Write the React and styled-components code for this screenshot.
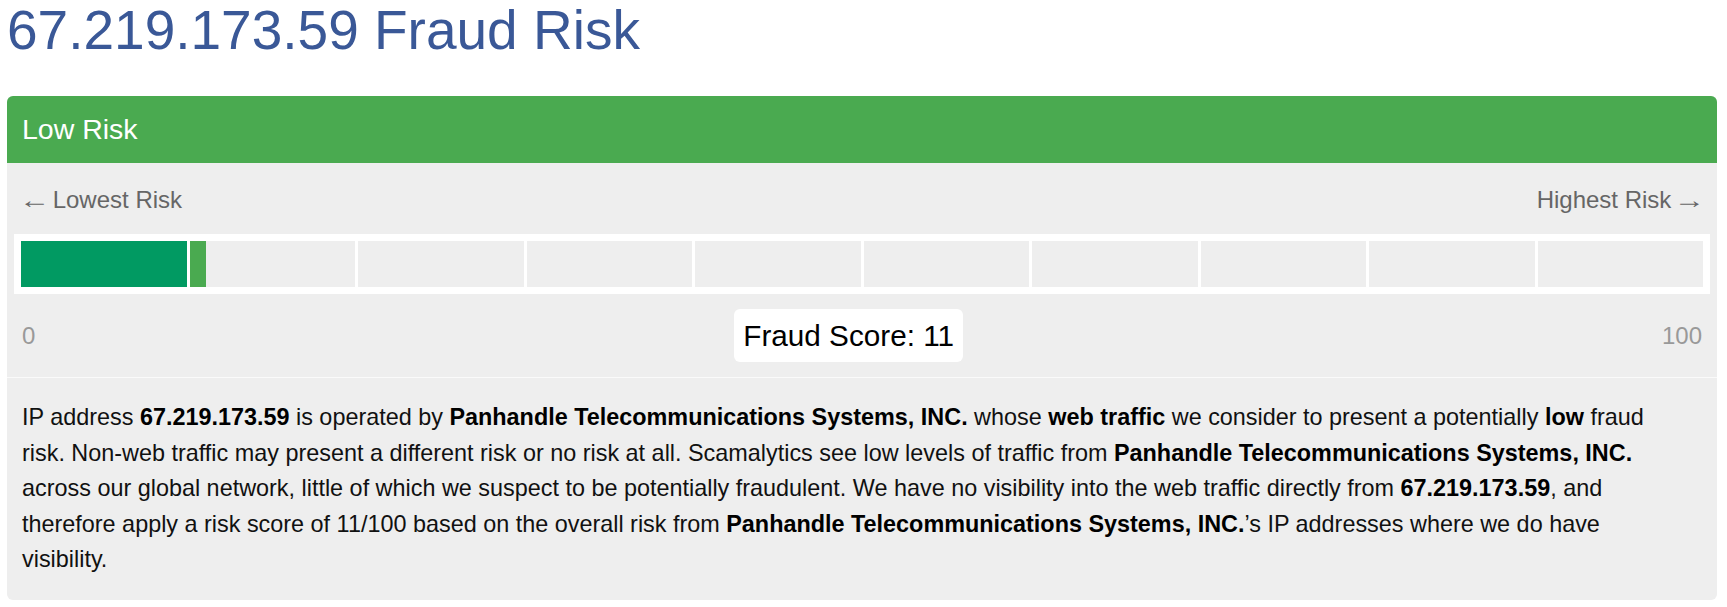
import React from 'react'
import styled, { createGlobalStyle } from 'styled-components'

const GlobalStyle = createGlobalStyle`
    html, body {
        margin: 0;
        padding: 0;
        background: #fff;
        font-family: "Liberation Sans", Arial, sans-serif;
    }
`;

const Page = styled.div`
    padding: 0 10px 0 7px;
`;

const Title = styled.h1`
    margin: 0 0 35px 0;
    font-size: 55px;
    font-weight: normal;
    line-height: 61px;
    color: #3a5897;
`;

const Panel = styled.div`
    border-radius: 6px;
    overflow: hidden;
    background-color: #eeeeee;
`;

const PanelHeading = styled.div`
    display: flex;
    align-items: center;
    height: 67px;
    padding: 0 15px;
    background-color: #4aaa50;
    color: #fff;
    font-size: 28.5px;
`;

const GaugeSection = styled.div`
    padding: 19px 7px 15px 7px;
`;

const LabelRow = styled.div`
    display: flex;
    justify-content: space-between;
    padding: 0 8px 0 8px;
    font-size: 24px;
    line-height: 36px;
    color: #666;
`;

const Arrow = styled.span`
    display: inline-block;
    width: 27px;
    margin: ${p => (p.$right ? '0 -3px 0 0' : '0 0 0 -3px')};
    transform: scaleX(1.3);
    transform-origin: ${p => (p.$right ? 'right' : 'left')} center;
    text-align: ${p => (p.$right ? 'right' : 'left')};
`;

const Bar = styled.div`
    display: flex;
    gap: 3px;
    margin-top: 16px;
    padding: 7px;
    background-color: #fff;
`;

const Segment = styled.div`
    flex: 1;
    height: 46px;
    background-color: #eeeeee;
`;

const SegmentFill = styled.div`
    height: 100%;
    background-color: ${p => p.$color};
`;

const ScoreRow = styled.div`
    display: flex;
    justify-content: space-between;
    align-items: center;
    margin-top: 15px;
    padding: 0 8px;
    font-size: 24px;
    color: #999;
`;

const ScoreBox = styled.div`
    display: flex;
    align-items: center;
    height: 53px;
    padding: 0 9px;
    border-radius: 6px;
    background-color: #fff;
    color: #000;
    font-size: 29.7px;
`;

const Description = styled.div`
    border-top: 1px solid #fafafa;
    padding: 22px 55px 22px 15px;
    font-size: 23.4px;
    line-height: 35.6px;
    color: #111;

    b {
        color: #000;
    }
`;

const segmentColors = [
    '#019a62', '#4aaa50', '#8bc34a', '#cddc39', '#ffeb3b',
    '#ffc107', '#ff9800', '#ff5722', '#f44336', '#d32f2f'
];

const score = 11;
const ip = '67.219.173.59';
const isp = 'Panhandle Telecommunications Systems, INC.';

const App = () => {
    return (
        <Page>
            <GlobalStyle />
            <Title>{ip} Fraud Risk</Title>
            <Panel>
                <PanelHeading>Low Risk</PanelHeading>
                <GaugeSection>
                    <LabelRow>
                        <span><Arrow>←</Arrow> Lowest Risk</span>
                        <span>Highest Risk <Arrow $right>→</Arrow></span>
                    </LabelRow>
                    <Bar>
                        {segmentColors.map((c, i) => {
                            const fill = Math.max(0, Math.min(10, score - i * 10)) * 10;
                            return (
                                <Segment key={i}>
                                    <SegmentFill $color={c} style={{ width: fill + '%' }} />
                                </Segment>
                            )
                        })}
                    </Bar>
                    <ScoreRow>
                        <span>0</span>
                        <ScoreBox>Fraud Score: {score}</ScoreBox>
                        <span>100</span>
                    </ScoreRow>
                </GaugeSection>
                <Description>
                    IP address <b>{ip}</b> is operated by <b>{isp}</b> whose <b>web traffic</b> we consider to present a potentially <b>low</b> fraud risk. Non-web traffic may present a different risk or no risk at all. Scamalytics see low levels of traffic from <b>{isp}</b> across our global network, little of which we suspect to be potentially fraudulent. We have no visibility into the web traffic directly from <b>{ip}</b>, and therefore apply a risk score of 11/100 based on the overall risk from <b>{isp}</b>’s IP addresses where we do have visibility.
                </Description>
            </Panel>
        </Page>
    )
}

export default App
